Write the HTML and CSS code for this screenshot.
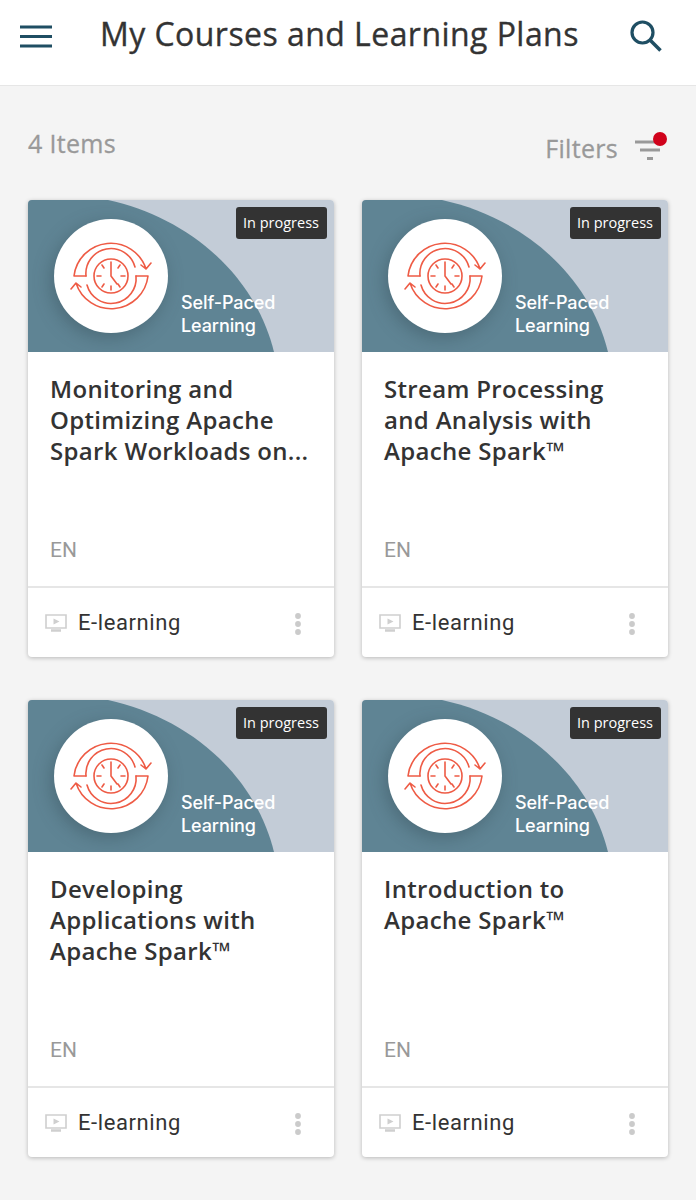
FILE: index.html
```html
<!DOCTYPE html>
<html lang="en">
<head>
<meta charset="utf-8">
<title>My Courses and Learning Plans</title>
<link rel="stylesheet" href="styles.css">
</head>
<body>
<svg class="defs" aria-hidden="true">
  <symbol id="thumb" viewBox="0 0 306 152">
    <rect width="306" height="152" fill="#c3ccd7"/>
    <path d="M0 0H80C158 17 226 72 246 152H0Z" fill="#5f8494"/>
    <circle class="disc" cx="83" cy="76" r="57" fill="#fff"/>
    <g transform="translate(83 76)" fill="none" stroke="#ee5b45" stroke-width="1.6" stroke-linecap="round" stroke-linejoin="round">
      <g id="loop">
        <path d="M-25 0H-37A37 37 0 0 1 35-7M30-11L35-7L40-13"/>
        <path d="M-25 0A25 25 0 0 1 24-9"/>
      </g>
      <use href="#loop" transform="rotate(180)"/>
      <circle r="17"/>
      <path d="M0-14V0L6 8M-14 0H-10M14 0H10M0 14V10M9-11L7-8M-9-11L-7-8M-9 11L-7 8M9 11L7 8"/>
    </g>
  </symbol>
  <symbol id="screen" viewBox="0 0 22 18">
    <path d="M1 1H21V14H1Z" fill="none" stroke="#cfcfcf" stroke-width="1.6"/>
    <path d="M8.5 4.5L14.5 7.5L8.5 10.5Z" fill="#cfcfcf"/>
    <path d="M6 16.5H16" stroke="#cfcfcf" stroke-width="2.4"/>
  </symbol>
  <symbol id="kebab" viewBox="0 0 6 22">
    <circle cx="3" cy="3" r="2.9" fill="#cbcbcb"/>
    <circle cx="3" cy="11" r="2.9" fill="#cbcbcb"/>
    <circle cx="3" cy="19" r="2.9" fill="#cbcbcb"/>
  </symbol>
</svg>

<header class="topbar">
  <svg class="menu-icon" viewBox="0 0 32 24" aria-label="Menu">
    <path d="M0 3H32M0 12.500H32M0 22H32" stroke="#1f4e63" stroke-width="3.200"/>
  </svg>
  <h1 class="page-title">My Courses and Learning Plans</h1>
  <svg class="search-icon" viewBox="0 0 32 32" aria-label="Search">
    <circle cx="12.500" cy="12.500" r="10.500" fill="none" stroke="#1f4e63" stroke-width="3.200"/>
    <path d="M20 20L30.500 30.500" stroke="#1f4e63" stroke-width="3.600"/>
  </svg>
</header>

<main class="content">
  <div class="toolbar">
    <span class="count">4 Items</span>
    <div class="filters">
      <span>Filters</span>
      <span class="filter-icon">
        <svg class="filter-lines" viewBox="0 0 26 20">
          <path d="M0 2H26M5 10H25M12 18.500H18" stroke="#999" stroke-width="3"/>
        </svg>
        <span class="filter-dot"></span>
      </span>
    </div>
  </div>

  <div class="grid">
    <article class="card">
      <div class="thumb">
        <svg class="thumb-art"><use href="#thumb"/></svg>
        <span class="badge">In progress</span>
        <span class="thumb-label">Self-Paced<br>Learning</span>
      </div>
      <div class="card-body">
        <h2 class="card-title">Monitoring and Optimizing Apache Spark Workloads on...</h2>
        <span class="lang">EN</span>
      </div>
      <div class="card-foot">
        <svg class="screen-icon"><use href="#screen"/></svg>
        <span class="type">E-learning</span>
        <svg class="kebab-icon"><use href="#kebab"/></svg>
      </div>
    </article>

    <article class="card">
      <div class="thumb">
        <svg class="thumb-art"><use href="#thumb"/></svg>
        <span class="badge">In progress</span>
        <span class="thumb-label">Self-Paced<br>Learning</span>
      </div>
      <div class="card-body">
        <h2 class="card-title">Stream Processing and Analysis with Apache Spark™</h2>
        <span class="lang">EN</span>
      </div>
      <div class="card-foot">
        <svg class="screen-icon"><use href="#screen"/></svg>
        <span class="type">E-learning</span>
        <svg class="kebab-icon"><use href="#kebab"/></svg>
      </div>
    </article>

    <article class="card">
      <div class="thumb">
        <svg class="thumb-art"><use href="#thumb"/></svg>
        <span class="badge">In progress</span>
        <span class="thumb-label">Self-Paced<br>Learning</span>
      </div>
      <div class="card-body">
        <h2 class="card-title">Developing Applications with Apache Spark™</h2>
        <span class="lang">EN</span>
      </div>
      <div class="card-foot">
        <svg class="screen-icon"><use href="#screen"/></svg>
        <span class="type">E-learning</span>
        <svg class="kebab-icon"><use href="#kebab"/></svg>
      </div>
    </article>

    <article class="card">
      <div class="thumb">
        <svg class="thumb-art"><use href="#thumb"/></svg>
        <span class="badge">In progress</span>
        <span class="thumb-label">Self-Paced<br>Learning</span>
      </div>
      <div class="card-body">
        <h2 class="card-title">Introduction to<br>Apache Spark™</h2>
        <span class="lang">EN</span>
      </div>
      <div class="card-foot">
        <svg class="screen-icon"><use href="#screen"/></svg>
        <span class="type">E-learning</span>
        <svg class="kebab-icon"><use href="#kebab"/></svg>
      </div>
    </article>
  </div>
</main>
</body>
</html>
```
FILE: styles.css
```css
* { box-sizing: border-box; }
html, body { margin: 0; padding: 0; }
body {
  width: 696px;
  height: 1200px;
  overflow: hidden;
  background: #f4f4f4;
  font-family: "Open Sans", sans-serif;
  color: #333;
}
.defs { position: absolute; width: 0; height: 0; overflow: hidden; }
.disc { filter: drop-shadow(-3px 5px 9px rgba(40, 60, 70, .35)); }

.topbar {
  height: 86px;
  background: #fff;
  border-bottom: 1px solid #e6e6e6;
  display: flex;
  align-items: center;
  padding: 0 34px 0 20px;
}
.menu-icon { width: 32px; height: 24px; flex: none; margin-top: -14px; }
.page-title {
  margin: -17px 0 0 48px;
  font-size: 32px;
  font-weight: 400;
  line-height: 40px;
  letter-spacing: .45px;
  -webkit-text-stroke: .35px #333;
  white-space: nowrap;
  flex: 1;
}
.search-icon { width: 32px; height: 32px; flex: none; margin-top: -14px; }

.content { padding: 0 28px; }
.toolbar {
  height: 114px;
  display: flex;
  justify-content: space-between;
  padding-top: 40px;
  color: #999;
  font-size: 25px;
  font-weight: 400;
  line-height: 34px;
  letter-spacing: .3px;
  -webkit-text-stroke: .3px #999;
}
.filters { display: flex; gap: 17px; padding-top: 5px; }
.filter-icon { position: relative; width: 26px; height: 34px; padding-top: 9px; margin-right: 7px; }
.filter-lines { display: block; width: 26px; height: 20px; }
.filter-dot {
  position: absolute;
  left: 18px;
  top: 1px;
  width: 14px;
  height: 14px;
  border-radius: 50%;
  background: #d0021b;
}

.grid {
  display: grid;
  grid-template-columns: 306px 306px;
  column-gap: 28px;
  row-gap: 43px;
}
.card {
  height: 457px;
  background: #fff;
  border-radius: 4px;
  overflow: hidden;
  box-shadow: 0 1px 4px rgba(0, 0, 0, .25);
  display: flex;
  flex-direction: column;
}
.thumb { position: relative; height: 152px; flex: none; }
.thumb-art { display: block; width: 306px; height: 152px; }
.badge {
  position: absolute;
  top: 7px;
  right: 7px;
  height: 32px;
  padding: 0 8px 0 7px;
  border-radius: 3px;
  background: #333;
  color: #fff;
  font-size: 14.500px;
  line-height: 32px;
}
.thumb-label {
  position: absolute;
  left: 153px;
  top: 92px;
  color: #fff;
  font-family: Inter, sans-serif;
  font-size: 18px;
  font-weight: 500;
  line-height: 22.500px;
  letter-spacing: -.1px;
}
.card-body {
  flex: 1;
  padding: 21px 22px 0;
  display: flex;
  flex-direction: column;
  justify-content: space-between;
}
.card-title {
  margin: 0;
  font-size: 24px;
  font-weight: 600;
  line-height: 31px;
  letter-spacing: .33px;
}
.lang {
  font-family: Roboto, sans-serif;
  font-size: 21px;
  line-height: 24px;
  color: #999;
  margin-bottom: 24px;
}
.card-foot {
  height: 71px;
  flex: none;
  border-top: 2px solid #e6e6e6;
  display: flex;
  align-items: center;
  padding: 0 33px 0 17px;
}
.screen-icon { width: 22px; height: 18px; flex: none; }
.type {
  flex: 1;
  margin-left: 11px;
  margin-top: 1px;
  font-family: Roboto, sans-serif;
  font-size: 22px;
  line-height: 28px;
  letter-spacing: .6px;
}
.kebab-icon { width: 6px; height: 22px; flex: none; margin-top: 2px; }
```
